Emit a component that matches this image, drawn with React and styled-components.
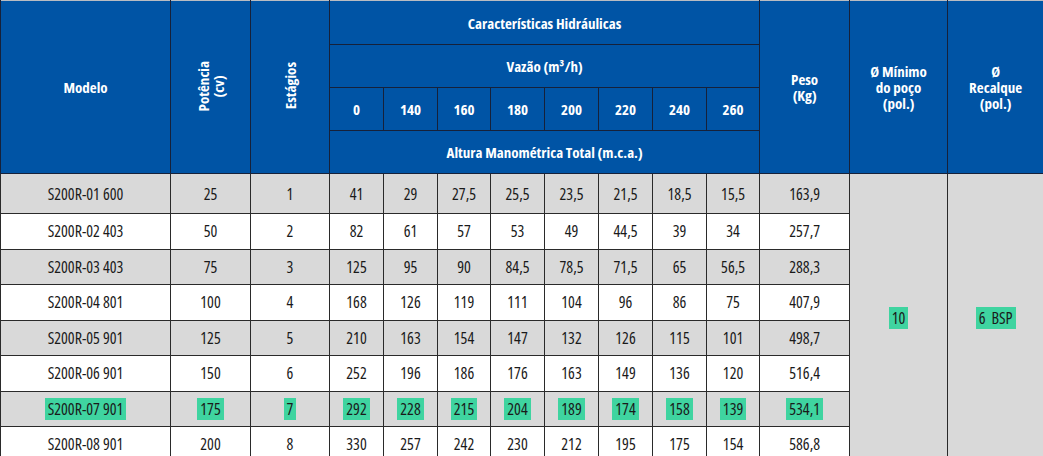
import React from 'react';
import styled, { createGlobalStyle } from 'styled-components';

const GlobalStyle = createGlobalStyle`
  html, body {
    margin: 0;
    padding: 0;
    background: #ffffff;
  }
`;

const Table = styled.table`
  width: 1043px;
  table-layout: fixed;
  border-collapse: collapse;
  border-top: 1px solid #b9bcc2;
  font-family: "Open Sans", "DejaVu Sans Condensed", "Liberation Sans", sans-serif;
  font-stretch: 75%;
`;

const Head = styled.th`
  background: #0054a5;
  color: #ffffff;
  font-size: 15px;
  font-weight: 700;
  line-height: 16px;
  text-align: center;
  vertical-align: middle;
  padding: 0;
  height: ${(p) => p.h || 42}px;
  border: 1px solid #16213a;
  border-top: none;
`;

const Rotated = styled.span`
  display: inline-block;
  writing-mode: vertical-rl;
  transform: rotate(180deg);
  line-height: 15px;
`;

const Cell = styled.td`
  background: ${(p) => (p.shade ? '#d9d9d9' : '#ffffff')};
  color: #1a1a1a;
  font-size: 16px;
  font-stretch: 80%;
  text-align: center;
  vertical-align: middle;
  padding: 0;
  height: ${(p) => p.h || 34.5}px;
  border: 1px solid #2a2a2a;
`;

const Merged = styled(Cell)`
  background: #d9d9d9;
`;

const Mark = styled.span`
  background: #3fd4a0;
  padding: 0 3px;
`;

const flows = ['0', '140', '160', '180', '200', '220', '240', '260'];

const rows = [
  ['S200R-01 600', '25', '1', '41', '29', '27,5', '25,5', '23,5', '21,5', '18,5', '15,5', '163,9'],
  ['S200R-02 403', '50', '2', '82', '61', '57', '53', '49', '44,5', '39', '34', '257,7'],
  ['S200R-03 403', '75', '3', '125', '95', '90', '84,5', '78,5', '71,5', '65', '56,5', '288,3'],
  ['S200R-04 801', '100', '4', '168', '126', '119', '111', '104', '96', '86', '75', '407,9'],
  ['S200R-05 901', '125', '5', '210', '163', '154', '147', '132', '126', '115', '101', '498,7'],
  ['S200R-06 901', '150', '6', '252', '196', '186', '176', '163', '149', '136', '120', '516,4'],
  ['S200R-07 901', '175', '7', '292', '228', '215', '204', '189', '174', '158', '139', '534,1'],
  ['S200R-08 901', '200', '8', '330', '257', '242', '230', '212', '195', '175', '154', '586,8'],
];

const highlighted = 6;

const widths = [170, 80, 79, 54, 54, 53, 54, 54, 54, 54, 53, 90, 98, 96];

export default function App() {
  return (
    <>
      <GlobalStyle />
      <Table>
        <colgroup>
          {widths.map((w, i) => (
            <col key={i} style={{ width: w }} />
          ))}
        </colgroup>
        <thead>
          <tr>
            <Head rowSpan={4}>Modelo</Head>
            <Head rowSpan={4}>
              <Rotated>
                Potência
                <br />
                (cv)
              </Rotated>
            </Head>
            <Head rowSpan={4}>
              <Rotated>Estágios</Rotated>
            </Head>
            <Head colSpan={8} h={43}>Características Hidráulicas</Head>
            <Head rowSpan={4}>
              Peso
              <br />
              (Kg)
            </Head>
            <Head rowSpan={4}>
              Ø Mínimo
              <br />
              do poço
              <br />
              (pol.)
            </Head>
            <Head rowSpan={4}>
              Ø
              <br />
              Recalque
              <br />
              (pol.)
            </Head>
          </tr>
          <tr>
            <Head colSpan={8}>Vazão (m³/h)</Head>
          </tr>
          <tr>
            {flows.map((f) => (
              <Head key={f}>{f}</Head>
            ))}
          </tr>
          <tr>
            <Head colSpan={8}>Altura Manométrica Total (m.c.a.)</Head>
          </tr>
        </thead>
        <tbody>
          {rows.map((r, i) => {
            const shade = i % 2 === 0;
            const mark = i === highlighted;
            return (
              <tr key={r[0]}>
                {r.map((v, j) => (
                  <Cell key={j} shade={shade} h={i === 0 ? 39 : 34.5}>
                    {mark ? <Mark>{v}</Mark> : v}
                  </Cell>
                ))}
                {i === 0 && (
                  <>
                    <Merged rowSpan={8}>
                      <Mark>10</Mark>
                    </Merged>
                    <Merged rowSpan={8}>
                      <Mark>6&nbsp;&nbsp;BSP</Mark>
                    </Merged>
                  </>
                )}
              </tr>
            );
          })}
        </tbody>
      </Table>
    </>
  );
}
